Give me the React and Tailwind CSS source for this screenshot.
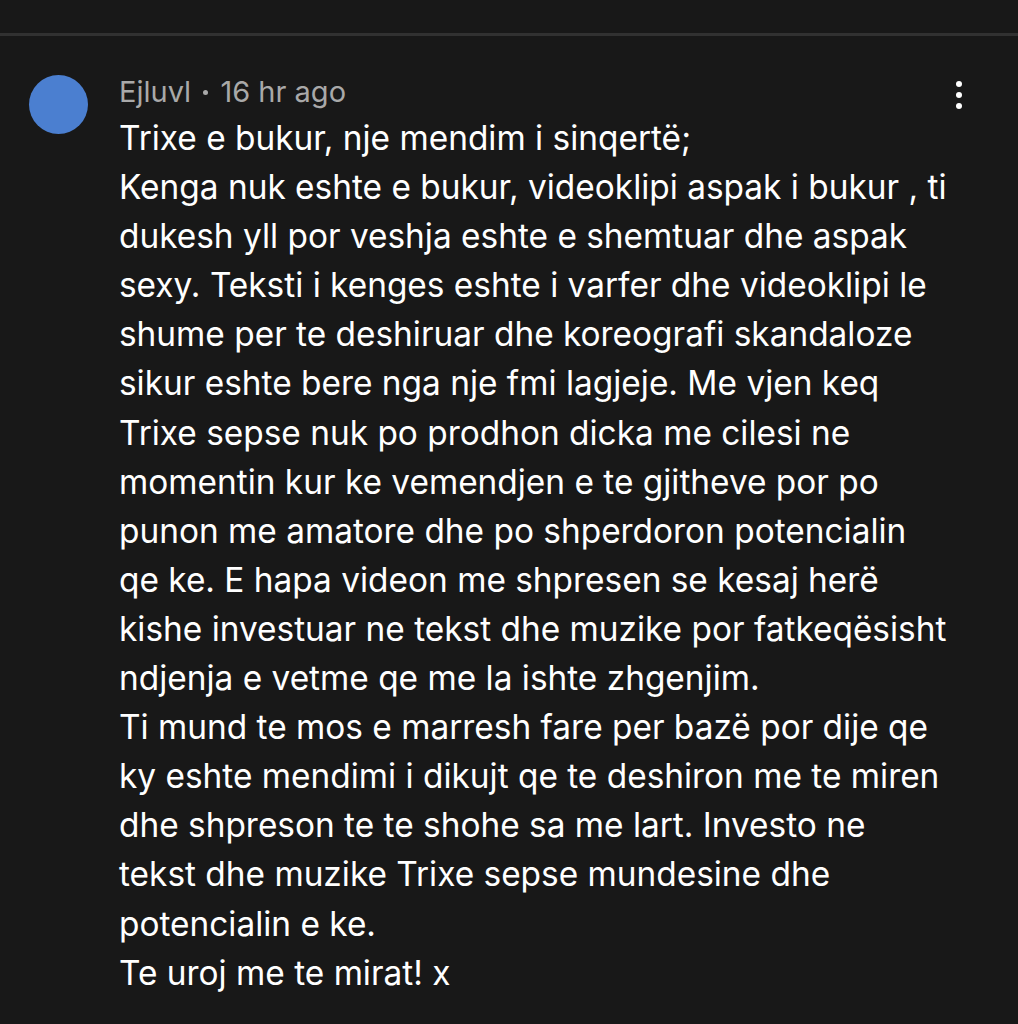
export default function App() {
  const lines = [
    "Trixe e bukur, nje mendim i sinqertë;",
    "Kenga nuk eshte e bukur, videoklipi aspak i bukur , ti",
    "dukesh yll por veshja eshte e shemtuar dhe aspak",
    "sexy. Teksti i kenges eshte i varfer dhe videoklipi le",
    "shume per te deshiruar dhe koreografi skandaloze",
    "sikur eshte bere nga nje fmi lagjeje. Me vjen keq",
    "Trixe sepse nuk po prodhon dicka me cilesi ne",
    "momentin kur ke vemendjen e te gjitheve por po",
    "punon me amatore dhe po shperdoron potencialin",
    "qe ke. E hapa videon me shpresen se kesaj herë",
    "kishe investuar ne tekst dhe muzike por fatkeqësisht",
    "ndjenja e vetme qe me la ishte zhgenjim.",
    "Ti mund te mos e marresh fare per bazë por dije qe",
    "ky eshte mendimi i dikujt qe te deshiron me te miren",
    "dhe shpreson te te shohe sa me lart. Investo ne",
    "tekst dhe muzike Trixe sepse mundesine dhe",
    "potencialin e ke.",
    "Te uroj me te mirat! x",
  ];
  return (
    <div className="w-[1018px] h-[1024px] bg-[#181818] overflow-hidden" style={{ fontFamily: "Inter, 'Noto Sans', sans-serif" }}>
      <div className="h-[33px]" />
      <div className="h-[3px] bg-[#313131]" />
      <div className="flex pt-[39px] pl-[29px] pr-[56px]">
        <div className="w-[59px] h-[59px] rounded-full bg-[#4b7fd0] shrink-0" />
        <div className="ml-[31px] flex-1">
          <div className="flex items-start justify-between">
            <div className="text-[29px] leading-[36px] text-[#a9a9a9] mt-[-1px] whitespace-nowrap">
              Ejluvl <span className="inline-block align-middle w-[5px] h-[5px] rounded-full bg-[#a9a9a9] mx-[4px] relative top-[-2px]" /> 16 hr ago
            </div>
            <div className="flex flex-col gap-[5px] mt-[6px]">
              <div className="w-[6px] h-[6px] rounded-full bg-white" />
              <div className="w-[6px] h-[6px] rounded-full bg-white" />
              <div className="w-[6px] h-[6px] rounded-full bg-white" />
            </div>
          </div>
          <div className="text-[33.4px] leading-[49.1px] text-white mt-[4px]">
            {lines.map((l, i) => (
              <div key={i} className="whitespace-nowrap">{l}</div>
            ))}
          </div>
        </div>
      </div>
    </div>
  );
}
